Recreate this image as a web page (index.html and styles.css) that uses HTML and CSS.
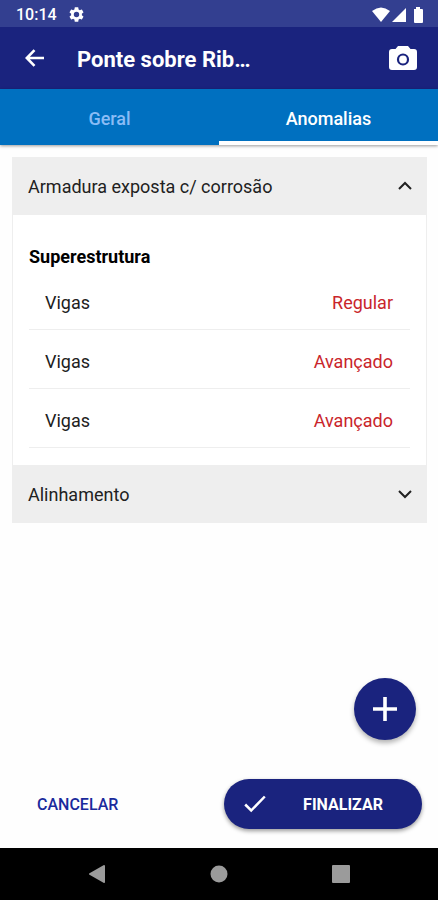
FILE: index.html
```html
<!DOCTYPE html>
<html lang="pt-BR">

<head>
  <meta charset="UTF-8">
  <meta name="viewport" content="width=device-width, initial-scale=1.0">
  <title>Anomalias</title>
  <link rel="stylesheet" href="styles.css">
</head>

<body>
  <div class="status-bar">
    <span class="clock">10:14</span>
    <svg class="gear" width="15" height="15" viewBox="2 2 20 20" fill="currentColor">
      <path d="M19.14 12.94c.04-.3.06-.61.06-.94 0-.32-.02-.64-.07-.94l2.03-1.58a.49.49 0 0 0 .12-.61l-1.92-3.32a.49.49 0 0 0-.59-.22l-2.39.96c-.5-.38-1.03-.7-1.62-.94l-.36-2.54a.48.48 0 0 0-.48-.41h-3.84a.47.47 0 0 0-.47.41l-.36 2.54c-.59.24-1.13.57-1.62.94l-2.39-.96a.48.48 0 0 0-.59.22L2.74 8.87a.47.47 0 0 0 .12.61l2.03 1.58c-.05.3-.09.63-.09.94s.02.64.07.94l-2.03 1.58a.49.49 0 0 0-.12.61l1.92 3.32c.12.22.37.29.59.22l2.39-.96c.5.38 1.03.7 1.62.94l.36 2.54c.05.24.24.41.48.41h3.84c.24 0 .44-.17.47-.41l.36-2.54c.59-.24 1.13-.56 1.62-.94l2.39.96c.22.08.47 0 .59-.22l1.92-3.32a.47.47 0 0 0-.12-.61zM12 15.6a3.6 3.6 0 1 1 0-7.2 3.6 3.6 0 0 1 0 7.2z"/>
    </svg>
    <svg class="signals" width="51" height="16" viewBox="0 0 51 16" fill="currentColor">
      <path d="M0 4Q9 -3 18 4L9 15z"/>
      <path d="M34 1v14H20z"/>
      <path d="M42 2h2V0h4v2h2q1 0 1 1v12q0 1-1 1h-7q-1 0-1-1z"/>
    </svg>
  </div>

  <header class="app-bar">
    <button class="icon-btn" aria-label="Voltar">
      <svg width="20" height="18" viewBox="0 0 20 18" fill="none" stroke="currentColor" stroke-width="2.6">
        <path d="M19 9H2M9.5 1.2L1.8 9l7.7 7.8"/>
      </svg>
    </button>
    <h1>Ponte sobre Rib…</h1>
    <button class="icon-btn" aria-label="Câmera">
      <svg width="28" height="24" viewBox="0 0 28 24">
        <path fill="currentColor" d="M9 0h10l2.500 3H25q3 0 3 3v15q0 3-3 3H3q-3 0-3-3V6q0-3 3-3h3.500z"/>
        <circle cx="14" cy="13.5" r="5" fill="none" stroke="#1a237e" stroke-width="2.2"/>
      </svg>
    </button>
  </header>

  <nav class="tabs">
    <button class="tab">Geral</button>
    <button class="tab active">Anomalias</button>
  </nav>

  <main>
    <div class="accordion">
      <button class="accordion-header" aria-expanded="true">
        <span>Armadura exposta c/ corrosão</span>
        <svg width="14" height="10" viewBox="0 0 14 10" fill="none" stroke="currentColor" stroke-width="2">
          <path d="M1 8l6-6 6 6"/>
        </svg>
      </button>
      <section class="accordion-body">
        <h2>Superestrutura</h2>
        <ul>
          <li><span>Vigas</span><span class="level">Regular</span></li>
          <li><span>Vigas</span><span class="level">Avançado</span></li>
          <li><span>Vigas</span><span class="level">Avançado</span></li>
        </ul>
      </section>
      <button class="accordion-header" aria-expanded="false">
        <span>Alinhamento</span>
        <svg width="14" height="10" viewBox="0 0 14 10" fill="none" stroke="currentColor" stroke-width="2">
          <path d="M1 2l6 6 6-6"/>
        </svg>
      </button>
    </div>
    <button class="fab" aria-label="Adicionar">
      <svg width="24" height="24" viewBox="0 0 24 24" stroke="currentColor" stroke-width="3.6">
        <path d="M12 0v24M0 12h24"/>
      </svg>
    </button>
  </main>

  <footer class="actions">
    <button class="cancel-btn">CANCELAR</button>
    <button class="finish-btn">
      <svg width="22" height="18" viewBox="0 0 22 18" fill="none" stroke="currentColor" stroke-width="2.5">
        <path d="M1.2 9.5l6 6L20.8 1.5"/>
      </svg>
      <span>FINALIZAR</span>
    </button>
  </footer>

  <div class="system-nav">
    <button aria-label="Voltar">
      <svg width="18" height="20" viewBox="0 0 18 20" fill="currentColor">
        <path d="M16 2L2 10l14 8z" stroke="currentColor" stroke-width="2" stroke-linejoin="round"/>
      </svg>
    </button>
    <button aria-label="Início">
      <svg width="18" height="18" viewBox="0 0 18 18" fill="currentColor">
        <circle cx="9" cy="9" r="8.5"/>
      </svg>
    </button>
    <button aria-label="Recentes">
      <svg width="18" height="18" viewBox="0 0 18 18" fill="currentColor">
        <rect width="18" height="18" rx="1"/>
      </svg>
    </button>
  </div>
</body>

</html>
```
FILE: styles.css
```css
* {
  box-sizing: border-box;
}

body {
  margin: 0;
  min-height: 100vh;
  display: flex;
  flex-direction: column;
  font-family: Roboto, sans-serif;
  font-size: 18px;
  color: #212121;
  background-color: #fefefe;
}

button {
  margin: 0;
  padding: 0;
  border: none;
  background: none;
  font: inherit;
  color: inherit;
  cursor: pointer;
}

svg {
  display: block;
}

.status-bar {
  height: 27px;
  padding: 2px 15px 0 16px;
  display: flex;
  align-items: center;
  gap: 12px;
  background-color: #333f90;
  color: white;
}

.clock {
  font-size: 16px;
  font-weight: 500;
}

.signals {
  margin-left: auto;
}

.app-bar {
  height: 62px;
  padding: 0 21px 0 25px;
  display: flex;
  align-items: center;
  background-color: #1a237e;
  color: white;
}

.app-bar h1 {
  flex: 1;
  margin: 0;
  padding: 4px 0 0 32px;
  font-size: 22px;
  line-height: 28px;
  font-weight: 700;
}

.tabs {
  height: 56px;
  display: flex;
  background-color: #0070c0;
  box-shadow: 0 1px 3px rgba(0, 0, 0, 0.4);
}

.tab {
  flex: 1;
  padding-top: 6px;
  border-bottom: 4px solid transparent;
  font-weight: 500;
  color: #8abcf5;
}

.tab.active {
  color: white;
  border-bottom-color: white;
}

main {
  flex: 1;
  display: flex;
  flex-direction: column;
  padding: 12px 11px 39px 12px;
}

.accordion {
  border: 1px solid #eeeeee;
  border-width: 0 1px;
}

.accordion-header {
  width: 100%;
  height: 58px;
  padding: 0 14px 0 15px;
  display: flex;
  justify-content: space-between;
  align-items: center;
  background-color: #eeeeee;
}

.accordion-body {
  padding: 30px 16px 17px;
  background-color: white;
}

.accordion-body h2 {
  margin: 0 0 2px;
  font-size: 18px;
  line-height: 24px;
  font-weight: 700;
  color: black;
}

.accordion-body ul {
  margin: 0;
  padding: 0;
  list-style: none;
}

.accordion-body li {
  height: 59px;
  padding: 4px 17px 0 16px;
  display: flex;
  justify-content: space-between;
  align-items: center;
  border-bottom: 1px solid #eeeeee;
}

.level {
  color: #c9252b;
}

.fab {
  width: 62px;
  height: 62px;
  margin: auto 11px 0 auto;
  display: grid;
  place-items: center;
  border-radius: 50%;
  background-color: #1a237e;
  color: white;
  box-shadow: 0 3px 5px rgba(0, 0, 0, 0.3);
}

.actions {
  padding: 0 16px 19px 37px;
  display: flex;
  justify-content: space-between;
  align-items: center;
  font-size: 16px;
}

.cancel-btn {
  font-weight: 500;
  color: #1a2a9c;
}

.finish-btn {
  width: 198px;
  height: 50px;
  padding: 0 20px;
  display: flex;
  align-items: center;
  border-radius: 25px;
  background-color: #1a237e;
  color: white;
  font-weight: 700;
  box-shadow: 0 2px 4px rgba(0, 0, 0, 0.4);
}

.finish-btn span {
  flex: 1;
  padding-left: 18px;
}

.system-nav {
  height: 52px;
  padding: 0 36px;
  display: flex;
  background-color: black;
  color: #9b9b9b;
}

.system-nav button {
  flex: 1;
  display: grid;
  place-items: center;
}
```
